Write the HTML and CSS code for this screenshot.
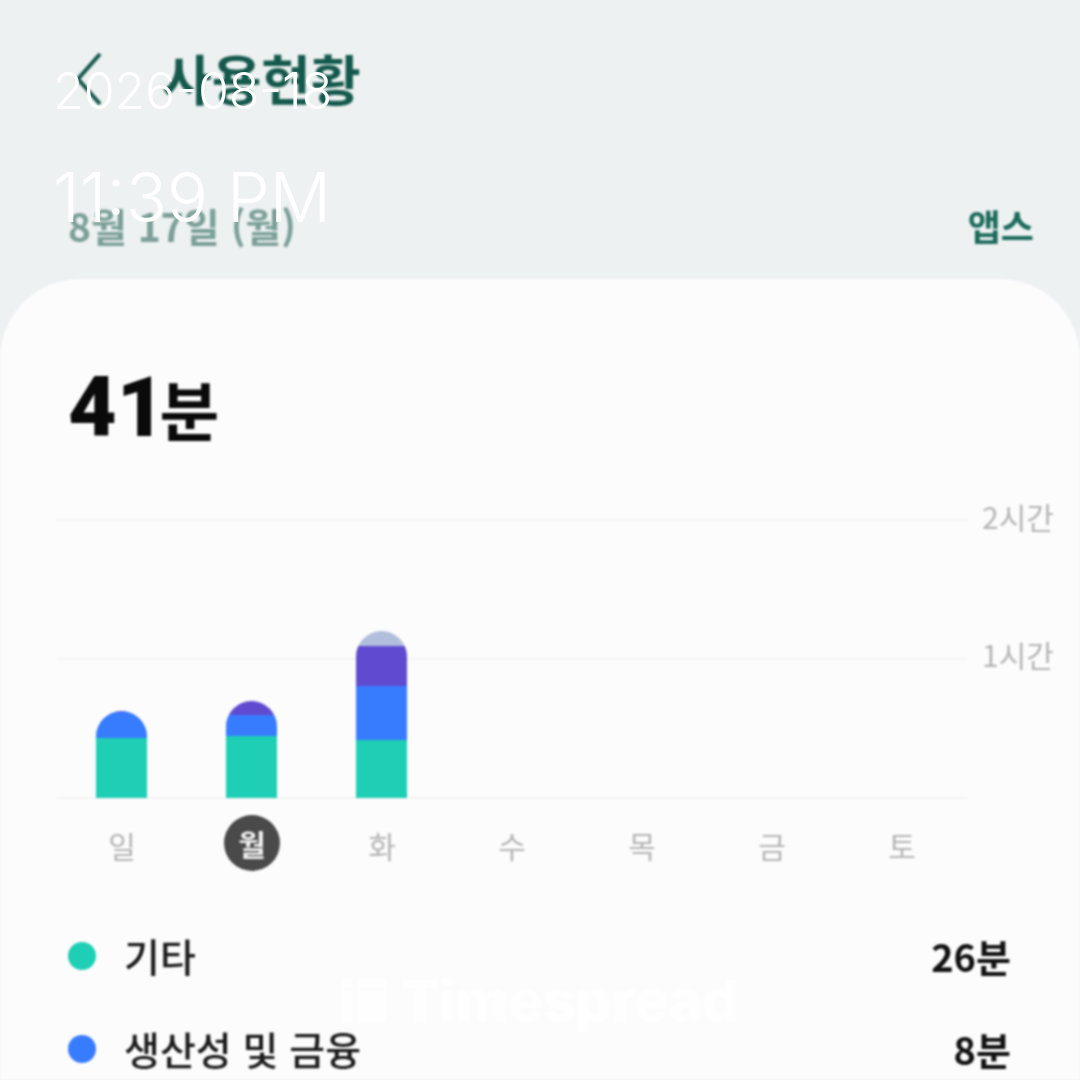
FILE: index.html
```html
<!DOCTYPE html>
<html lang="ko">
<head>
    <meta charset="UTF-8">
    <meta name="viewport" content="width=device-width, initial-scale=1.0">
    <title>사용 현황</title>
    <link rel="stylesheet" href="styles.css">
</head>
<body>
    <div class="screen">
        <!-- Header -->
        <div class="title-row">
            <svg class="back-icon" viewBox="0 0 28 54" width="28" height="54">
                <path d="M25 2 L3 27 L25 52" fill="none" stroke="#14594c" stroke-width="4"/>
            </svg>
            <h1>사용현황</h1>
        </div>
        <div class="date-row">
            <span class="date">8월 17일 (월)</span>
            <span class="apps-link">앱스</span>
        </div>

        <!-- Card -->
        <div class="card">
            <p class="total">41<span>분</span></p>

            <div class="chart">
                <div class="plot">
                    <div class="column">
                        <div class="bar">
                            <div class="seg seg-purple" style="height: 1px"></div>
                            <div class="seg seg-blue" style="height: 26px"></div>
                            <div class="seg seg-green" style="height: 60px"></div>
                        </div>
                    </div>
                    <div class="column">
                        <div class="bar">
                            <div class="seg seg-purple" style="height: 14px"></div>
                            <div class="seg seg-blue" style="height: 21px"></div>
                            <div class="seg seg-green" style="height: 62px"></div>
                        </div>
                    </div>
                    <div class="column">
                        <div class="bar">
                            <div class="seg seg-grey" style="height: 15px"></div>
                            <div class="seg seg-purple" style="height: 40px"></div>
                            <div class="seg seg-blue" style="height: 54px"></div>
                            <div class="seg seg-green" style="height: 58px"></div>
                        </div>
                    </div>
                    <div class="column"></div>
                    <div class="column"></div>
                    <div class="column"></div>
                    <div class="column"></div>
                </div>
                <div class="axis">
                    <span>2시간</span>
                    <span>1시간</span>
                </div>
            </div>

            <div class="days">
                <span class="day">일</span>
                <span class="day day-active">월</span>
                <span class="day">화</span>
                <span class="day">수</span>
                <span class="day">목</span>
                <span class="day">금</span>
                <span class="day">토</span>
            </div>

            <!-- Legend -->
            <div class="legend">
                <div class="legend-row">
                    <span class="dot dot-green"></span>
                    <span class="legend-name">기타</span>
                    <span class="legend-value">26분</span>
                </div>
                <div class="legend-row">
                    <span class="dot dot-blue"></span>
                    <span class="legend-name">생산성 및 금융</span>
                    <span class="legend-value">8분</span>
                </div>
            </div>
        </div>
    </div>

    <!-- Overlays on the photo -->
    <div class="stamp">
        <p class="stamp-date">2026-08-18</p>
        <p class="stamp-time">11:39 PM</p>
    </div>
    <div class="watermark">
        <svg viewBox="0 0 45 43" width="45" height="43">
            <rect x="0" y="0" width="10" height="9" fill="#fff"/>
            <rect x="0" y="12" width="10" height="31" fill="#fff"/>
            <rect x="16" y="0" width="29" height="9" fill="#fff"/>
            <rect x="16" y="12" width="29" height="31" fill="#fff"/>
        </svg>
        <span>Timespread</span>
    </div>
</body>
</html>
```

FILE: styles.css
```css
* {
    box-sizing: border-box;
}

html, body {
    margin: 0;
    padding: 0;
}

body {
    width: 1080px;
    height: 1080px;
    overflow: hidden;
    position: relative;
    font-family: "Noto Sans CJK KR", "Noto Sans", sans-serif;
    background-color: #edf1f2;
}

.screen {
    height: 1080px;
    overflow: hidden;
    filter: blur(0.8px);
}

/* Header */
.title-row {
    display: flex;
    align-items: center;
    height: 60px;
    margin-top: 50px;
    padding-left: 75px;
}

.back-icon {
    flex: none;
    margin-top: -2px;
}

h1 {
    margin: -4px 0 0 59px;
    font-size: 54px;
    line-height: 60px;
    font-weight: 700;
    color: #14594c;
}

.date-row {
    display: flex;
    justify-content: space-between;
    align-items: center;
    height: 50px;
    margin-top: 90px;
    padding: 0 46px 0 68px;
}

.date {
    font-size: 39px;
    font-weight: 700;
    color: #7b9f97;
}

.apps-link {
    font-size: 36px;
    font-weight: 700;
    color: #1b6a5b;
}

/* Card */
.card {
    height: 801px;
    margin-top: 29px;
    padding-top: 84px;
    background-color: #fcfcfc;
    border-radius: 80px 80px 0 0;
}

.total {
    margin: 0 0 0 68px;
    height: 90px;
    font-family: "Roboto", "Noto Sans CJK KR", sans-serif;
    font-size: 84px;
    line-height: 90px;
    font-weight: 900;
    color: #0a0a0a;
}

.total span {
    margin-left: -6px;
    font-family: "Noto Sans CJK KR", sans-serif;
    font-size: 65px;
    font-weight: 700;
}

/* Chart */
.chart {
    display: flex;
    margin: 66px 0 0 56px;
}

.plot {
    display: flex;
    align-items: flex-end;
    width: 912px;
    height: 280px;
    background-image:
        linear-gradient(#f3f4f4, #f3f4f4),
        linear-gradient(#f3f4f4, #f3f4f4),
        linear-gradient(#f3f4f4, #f3f4f4);
    background-repeat: no-repeat;
    background-size: 100% 2px;
    background-position: 0 0, 0 139px, 0 278px;
    padding-bottom: 1px;
}

.column {
    display: flex;
    justify-content: center;
    width: 130px;
}

.bar {
    width: 51px;
    overflow: hidden;
    border-radius: 26px 26px 0 0;
}

.seg-grey {
    background-color: #b1bfdc;
}

.seg-purple {
    background-color: #604bd0;
}

.seg-blue {
    background-color: #377bff;
}

.seg-green {
    background-color: #1ecfb6;
}

.axis {
    display: flex;
    flex-direction: column;
    gap: 94px;
    margin: -25px 0 0 14px;
    font-size: 30px;
    line-height: 44px;
    color: #b4b4b4;
}

/* Days */
.days {
    display: flex;
    margin: 16px 0 0 57px;
    width: 910px;
}

.day {
    display: flex;
    justify-content: center;
    align-items: center;
    width: 130px;
    height: 56px;
    padding-top: 4px;
    font-size: 30px;
    color: #b4b4b4;
}

.day-active {
    width: 56px;
    margin: 0 37px;
    padding-top: 0;
    border-radius: 50%;
    font-weight: 700;
    color: #f2f2f2;
    background-color: #4a4a4a;
}

/* Legend */
.legend {
    margin-top: 54px;
    padding: 0 69px 0 68px;
}

.legend-row {
    display: flex;
    align-items: center;
    height: 60px;
    margin-bottom: 33px;
}

.dot {
    flex: none;
    width: 28px;
    height: 28px;
    border-radius: 50%;
    margin-right: 28px;
    margin-top: 2px;
}

.dot-green {
    background-color: #1ecfb6;
}

.dot-blue {
    background-color: #377bff;
}

.legend-name {
    flex: 1;
    font-size: 39px;
    font-weight: 500;
    color: #1a1a1a;
}

.legend-value {
    font-size: 38px;
    font-weight: 700;
    color: #111111;
}

/* Overlays */
.stamp {
    position: absolute;
    left: 53px;
    top: 60px;
    font-family: "Inter", sans-serif;
    font-weight: 300;
    color: #ffffff;
}

.stamp p {
    margin: 0;
}

.stamp-date {
    font-size: 50px;
    line-height: 62px;
}

.stamp-time {
    margin-top: 36px !important;
    font-size: 68px;
    line-height: 78px;
}

.watermark {
    position: absolute;
    left: 342px;
    top: 979px;
    display: flex;
    align-items: center;
    gap: 14px;
    opacity: 0.75;
    font-family: "Inter", sans-serif;
    font-size: 57px;
    line-height: 43px;
    font-weight: 800;
    color: #ffffff;
}
```
